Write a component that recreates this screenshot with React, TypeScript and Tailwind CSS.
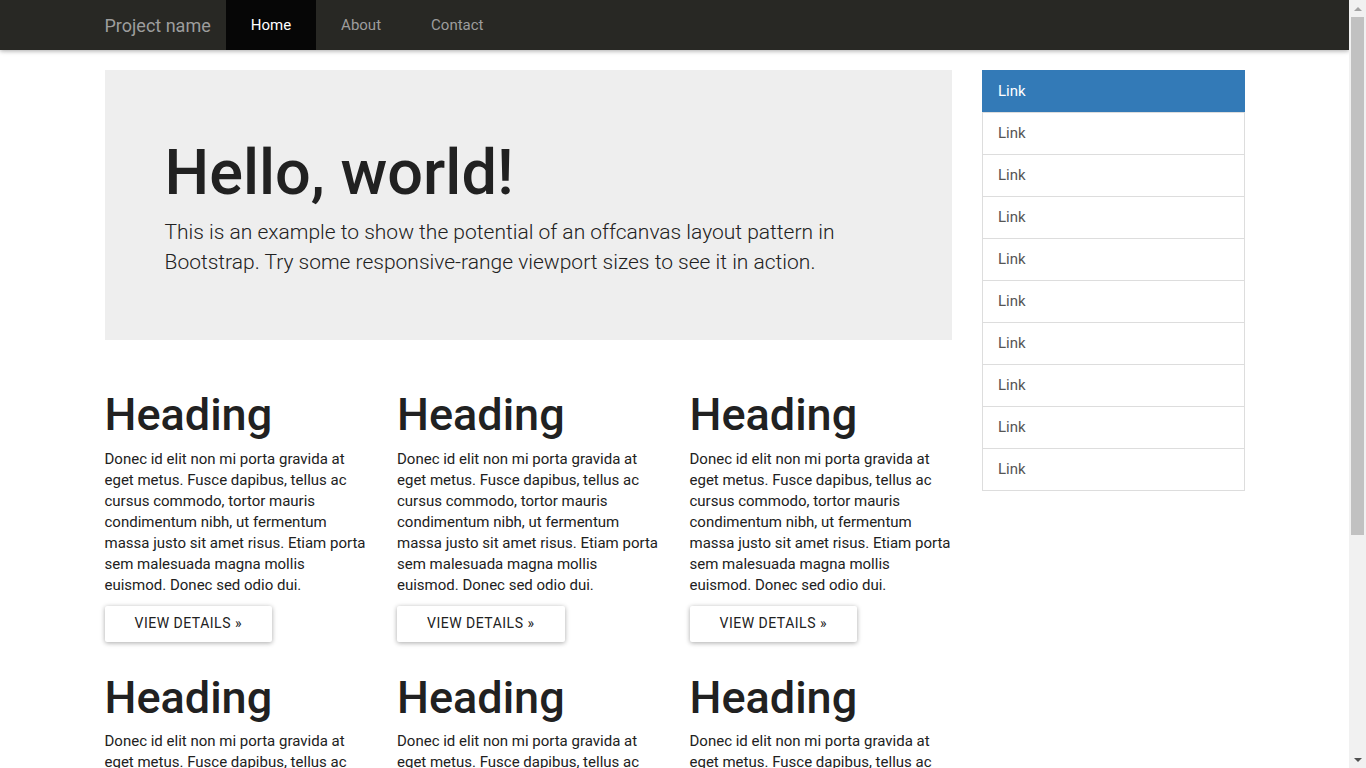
import React from 'react';

const navItems = ['Home', 'About', 'Contact'];

const body =
  'Donec id elit non mi porta gravida at eget metus. Fusce dapibus, tellus ac cursus commodo, tortor mauris condimentum nibh, ut fermentum massa justo sit amet risus. Etiam porta sem malesuada magna mollis euismod. Donec sed odio dui.';

function Card() {
  return (
    <div className="px-[15px]">
      <h2 className="mt-5 mb-[9px] text-[45px] font-medium leading-[1.1] text-[#212121]">Heading</h2>
      <p className="mb-[10px] text-[15px] leading-[21px] text-[#212121]">{body}</p>
      <p className="mb-[11px]">
        <button className="h-9 rounded-[2px] bg-white px-[30px] text-[14px] uppercase tracking-[0.5px] text-[#212121] shadow-[0_1px_6px_rgba(0,0,0,0.12),0_1px_4px_rgba(0,0,0,0.24)]">
          View details »
        </button>
      </p>
    </div>
  );
}

function Scrollbar() {
  return (
    <div className="flex w-[17px] shrink-0 flex-col items-center bg-[#f1f1f1]">
      <div className="flex h-[17px] w-full items-center justify-center">
        <svg width="8" height="4" viewBox="0 0 8 4">
          <path d="M0 4 L4 0 L8 4 Z" fill="#a3a3a3" />
        </svg>
      </div>
      <div className="h-[518px] w-[13px] bg-[#c1c1c1]" />
      <div className="flex-1" />
      <div className="flex h-[17px] w-full items-center justify-center">
        <svg width="8" height="4" viewBox="0 0 8 4">
          <path d="M0 0 L8 0 L4 4 Z" fill="#505050" />
        </svg>
      </div>
    </div>
  );
}

export default function App() {
  return (
    <div className="flex h-screen overflow-hidden bg-white font-['Roboto',sans-serif] text-[#212121]">
      <div className="min-w-0 flex-1 overflow-hidden">
        <nav className="mb-5 h-[50px] bg-[#282824] shadow-[0_1px_6px_rgba(0,0,0,0.12),0_1px_4px_rgba(0,0,0,0.24)]">
          <div className="mx-auto flex h-full w-[1170px] px-[15px]">
            <a className="flex h-[50px] items-center pr-[15px] text-[18px] text-[#9d9d9d]">Project name</a>
            <ul className="flex">
              {navItems.map((item, i) => (
                <li key={item}>
                  <a
                    className={
                      i === 0
                        ? 'flex h-[50px] items-center bg-[#060606] px-[25px] text-[15px] text-white'
                        : 'flex h-[50px] items-center px-[25px] text-[15px] text-[#9d9d9d]'
                    }
                  >
                    {item}
                  </a>
                </li>
              ))}
            </ul>
          </div>
        </nav>

        <div className="mx-auto w-[1170px] px-[15px]">
          <div className="-mx-[15px] flex">
            <div className="w-[877.5px] px-[15px]">
              <div className="mb-[30px] bg-[#eeeeee] px-[60px] pb-[48px] pt-[48px]">
                <h1 className="mt-5 mb-[10px] text-[63px] font-medium leading-[1.1] text-[#212121]">Hello, world!</h1>
                <p className="mb-[15px] text-[21px] font-light leading-[30px] text-[#212121]">
                  This is an example to show the potential of an offcanvas layout pattern in Bootstrap. Try some
                  responsive-range viewport sizes to see it in action.
                </p>
              </div>
              <div className="-mx-[15px] grid grid-cols-3">
                {Array.from({ length: 6 }).map((_, i) => (
                  <Card key={i} />
                ))}
              </div>
            </div>
            <div className="w-[292.5px] px-[15px]">
              <div className="mb-5 flex flex-col">
                {Array.from({ length: 10 }).map((_, i) => (
                  <a
                    key={i}
                    className={
                      i === 0
                        ? 'h-[43px] border border-[#337ab7] bg-[#337ab7] px-[15px] py-[10px] text-[15px] leading-[21px] text-white'
                        : '-mt-px h-[43px] border border-[#dddddd] bg-white px-[15px] py-[10px] text-[15px] leading-[21px] text-[#555555]'
                    }
                  >
                    Link
                  </a>
                ))}
              </div>
            </div>
          </div>
          <hr className="my-5 border-[#eeeeee]" />
          <footer className="pb-5">
            <p className="text-[15px] text-[#212121]">© 2016 Company, Inc.</p>
          </footer>
        </div>
      </div>
      <Scrollbar />
    </div>
  );
}
